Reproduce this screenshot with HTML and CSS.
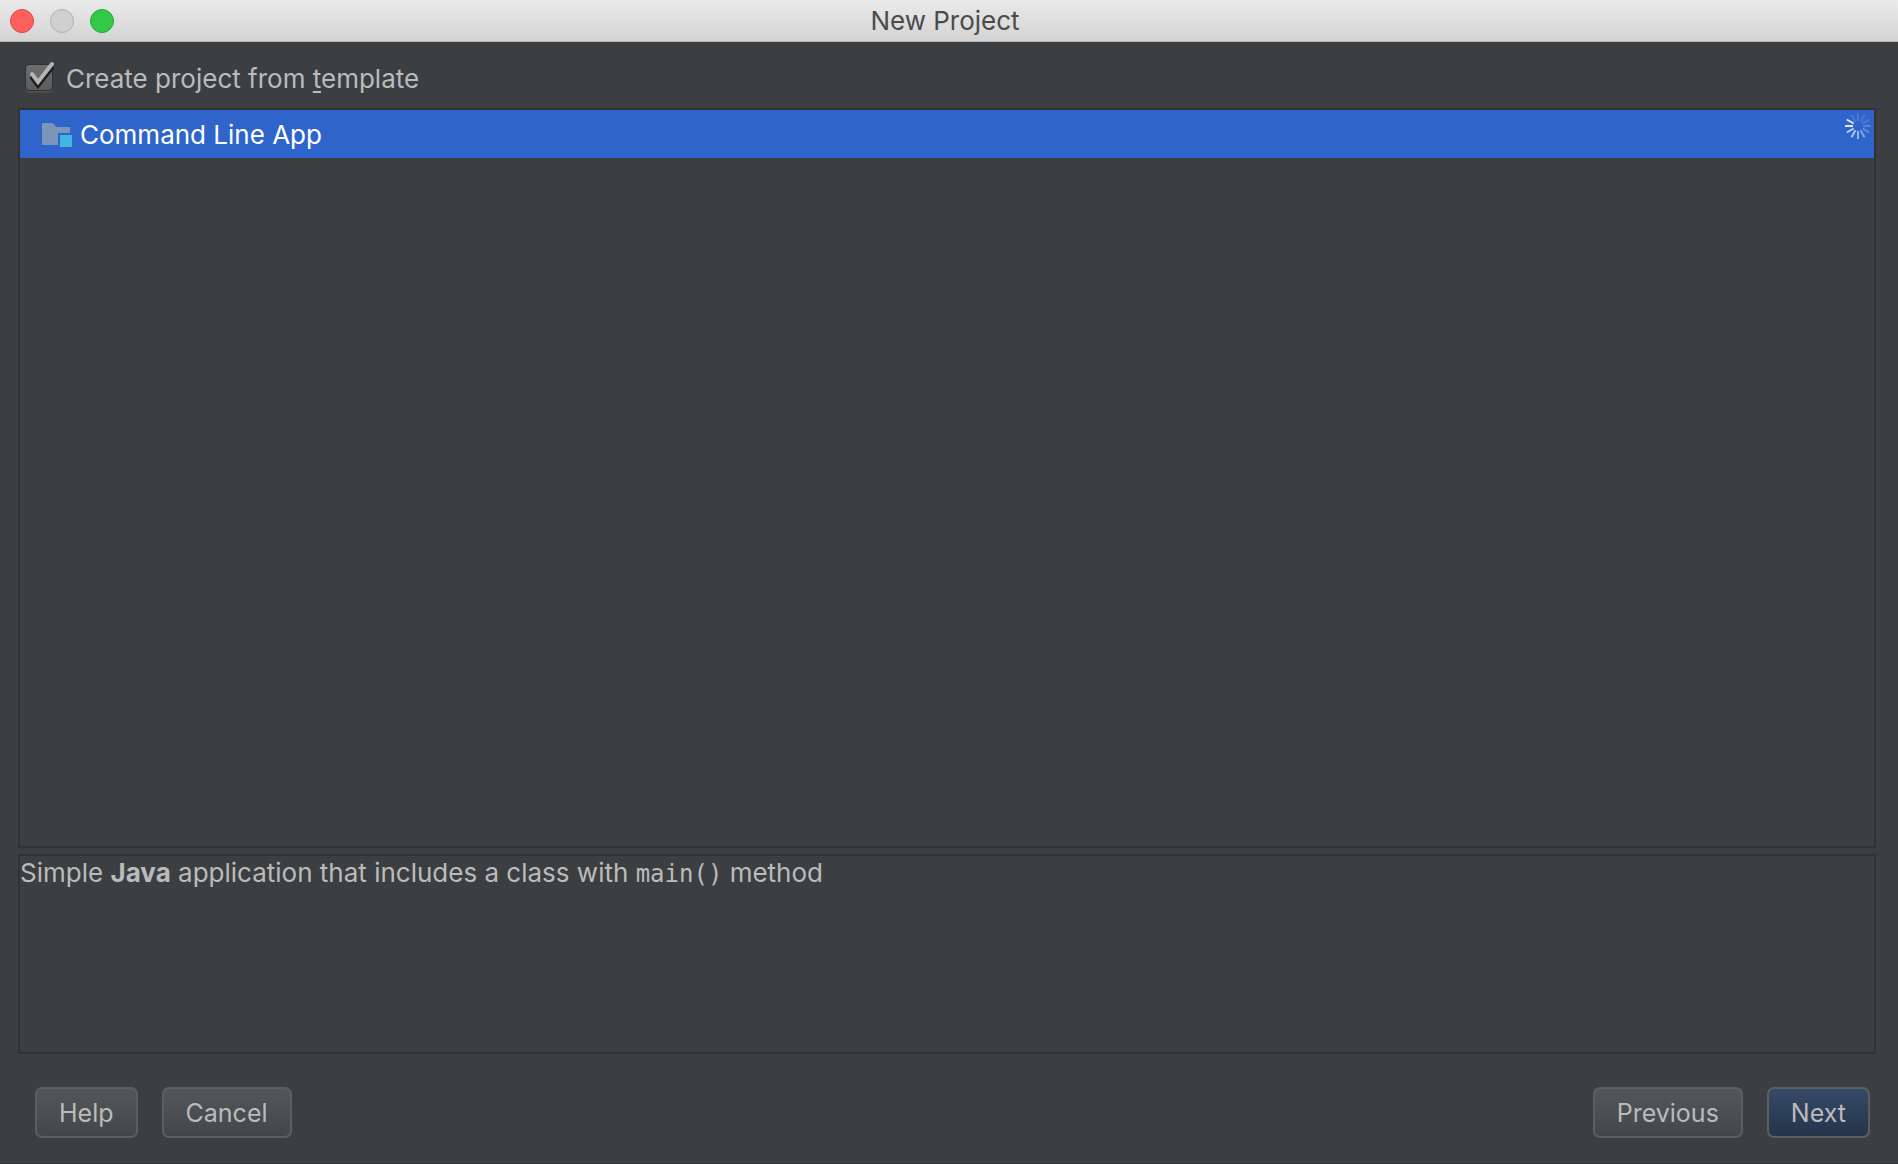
FILE: index.html
```html
<!DOCTYPE html>
<html lang="en">
<head>
  <meta charset="UTF-8">
  <meta name="viewport" content="width=device-width, initial-scale=1.0">
  <title>New Project</title>
  <link rel="stylesheet" href="styles.css">
</head>
<body>

  <header class="titlebar">
    <div class="window-buttons">
      <button type="button" class="dot close" aria-label="Close"></button>
      <button type="button" class="dot minimize" aria-label="Minimize" disabled></button>
      <button type="button" class="dot maximize" aria-label="Zoom"></button>
    </div>
    <h1>New Project</h1>
  </header>

  <main class="content">
    <div class="option">
      <span class="checkbox">
        <input type="checkbox" id="from-template" checked>
        <svg class="tick" width="32" height="34" viewBox="0 0 32 34" fill="none" stroke-width="4" stroke-linecap="round" stroke-linejoin="miter">
          <path d="M10 18l6 8L30 8" stroke="#1e1e1e"/>
          <path d="M10 14l6 8L30 4" stroke="#b4b4b4"/>
        </svg>
      </span>
      <label for="from-template">Create project from <u>t</u>emplate</label>
    </div>

    <!-- Template list -->
    <div class="panel templates">
      <button type="button" class="template selected">
        <svg class="folder" width="30" height="26" viewBox="0 0 30 26">
          <path d="M0 1h9q3 0 5 4h14v6H16v12H0z" fill="#7b95bb"/>
          <path d="M18 13h12v12H18z" fill="#40b6e0"/>
        </svg>
        <span>Command Line App</span>
      </button>
      <svg class="spinner" width="26" height="26" viewBox="-13 -13 26 26" stroke="#fff" stroke-width="2">
        <path d="M-5 0h-8" opacity=".85"/>
        <path d="M-5 0h-8" opacity=".85" transform="rotate(30)"/>
        <path d="M-5 0h-8" opacity=".12" transform="rotate(60)"/>
        <path d="M-5 0h-8" opacity=".12" transform="rotate(90)"/>
        <path d="M-5 0h-8" opacity=".12" transform="rotate(120)"/>
        <path d="M-5 0h-8" opacity=".15" transform="rotate(150)"/>
        <path d="M-5 0h-8" opacity=".2" transform="rotate(180)"/>
        <path d="M-5 0h-8" opacity=".25" transform="rotate(210)"/>
        <path d="M-5 0h-8" opacity=".4" transform="rotate(240)"/>
        <path d="M-5 0h-8" opacity=".5" transform="rotate(270)"/>
        <path d="M-5 0h-8" opacity=".6" transform="rotate(300)"/>
        <path d="M-5 0h-8" opacity=".7" transform="rotate(330)"/>
      </svg>
    </div>

    <div class="panel description">
      <p>Simple <b>Java</b> application that includes a class with <code>main()</code> method</p>
    </div>
  </main>

  <footer class="actions">
    <button type="button" class="btn">Help</button>
    <button type="button" class="btn">Cancel</button>
    <span class="spacer"></span>
    <button type="button" class="btn">Previous</button>
    <button type="button" class="btn primary">Next</button>
  </footer>

</body>
</html>
```
FILE: styles.css
```css
* {
  box-sizing: border-box;
  margin: 0;
  padding: 0;
}
body {
  display: flex;
  flex-direction: column;
  min-height: 100vh;
  background-color: #3c3f41;
  color: #bbb;
  font-family: Inter, "Liberation Sans", sans-serif;
  font-size: 26px;
  line-height: 32px;
}
button {
  font: inherit;
  color: inherit;
  border: none;
}
.titlebar {
  display: grid;
  grid-template-columns: 1fr auto 1fr;
  align-items: center;
  height: 42px;
  padding: 0 18px 0 10px;
  background: linear-gradient(#ebebeb, #d3d3d3);
  border-bottom: 1px solid #b4b4b4;
}
.titlebar h1 {
  color: #4b4b4b;
  font-size: 26px;
  font-weight: 400;
}
.window-buttons {
  display: flex;
  gap: 16px;
}
.dot {
  width: 24px;
  height: 24px;
  border: 1px solid;
  border-radius: 50%;
}
.close {
  background-color: #fc605c;
  border-color: #df4744;
}
.minimize {
  background-color: #d0d0d0;
  border-color: #b0b0b0;
}
.maximize {
  background-color: #34c84a;
  border-color: #27a835;
}
.content {
  display: flex;
  flex: 1;
  flex-direction: column;
  padding: 0 22px 0 18px;
}
.option {
  display: flex;
  align-items: center;
  gap: 14px;
  height: 66px;
  padding: 8px 0 0 4px;
}
.option u {
  text-decoration-thickness: 2px;
  text-underline-offset: 3px;
}
.checkbox {
  position: relative;
  width: 30px;
  height: 30px;
}
.checkbox input {
  appearance: none;
  display: block;
  width: 28px;
  height: 27px;
  margin: 0 0 0 3px;
  background: linear-gradient(#6e6e6e, #5c5c5c);
  border: 1px solid #2f3133;
  border-radius: 4px;
  box-shadow: 0 2px 0 #4c4f51;
}
.tick {
  position: absolute;
  top: -4px;
  left: 0;
  visibility: hidden;
  pointer-events: none;
}
.checkbox input:checked + .tick {
  visibility: visible;
}
.panel {
  border: 2px solid #323232;
}
.templates {
  position: relative;
  flex: 1;
  margin-bottom: 6px;
}
.template {
  display: flex;
  align-items: center;
  gap: 8px;
  width: 100%;
  height: 48px;
  padding: 2px 22px 0;
  background: none;
  text-align: left;
}
.template.selected {
  background-color: #2f65ca;
  color: #fff;
}
.spinner {
  position: absolute;
  top: 3px;
  right: 3px;
}
.description {
  height: 200px;
  padding-top: 1px;
}
.description code {
  font-family: "DejaVu Sans Mono", monospace;
  font-size: 24px;
}
.actions {
  display: flex;
  gap: 24px;
  padding: 33px 28px 25px 35px;
  border-bottom: 1px solid #323232;
}
.spacer {
  flex: 1;
}
.btn {
  height: 51px;
  padding: 0 22px;
  background: linear-gradient(#525759, #434749);
  border: 2px solid #5c5f60;
  border-radius: 7px;
  font-size: 25px;
}
.btn.primary {
  background: linear-gradient(#354a68, #25344b);
}
```
